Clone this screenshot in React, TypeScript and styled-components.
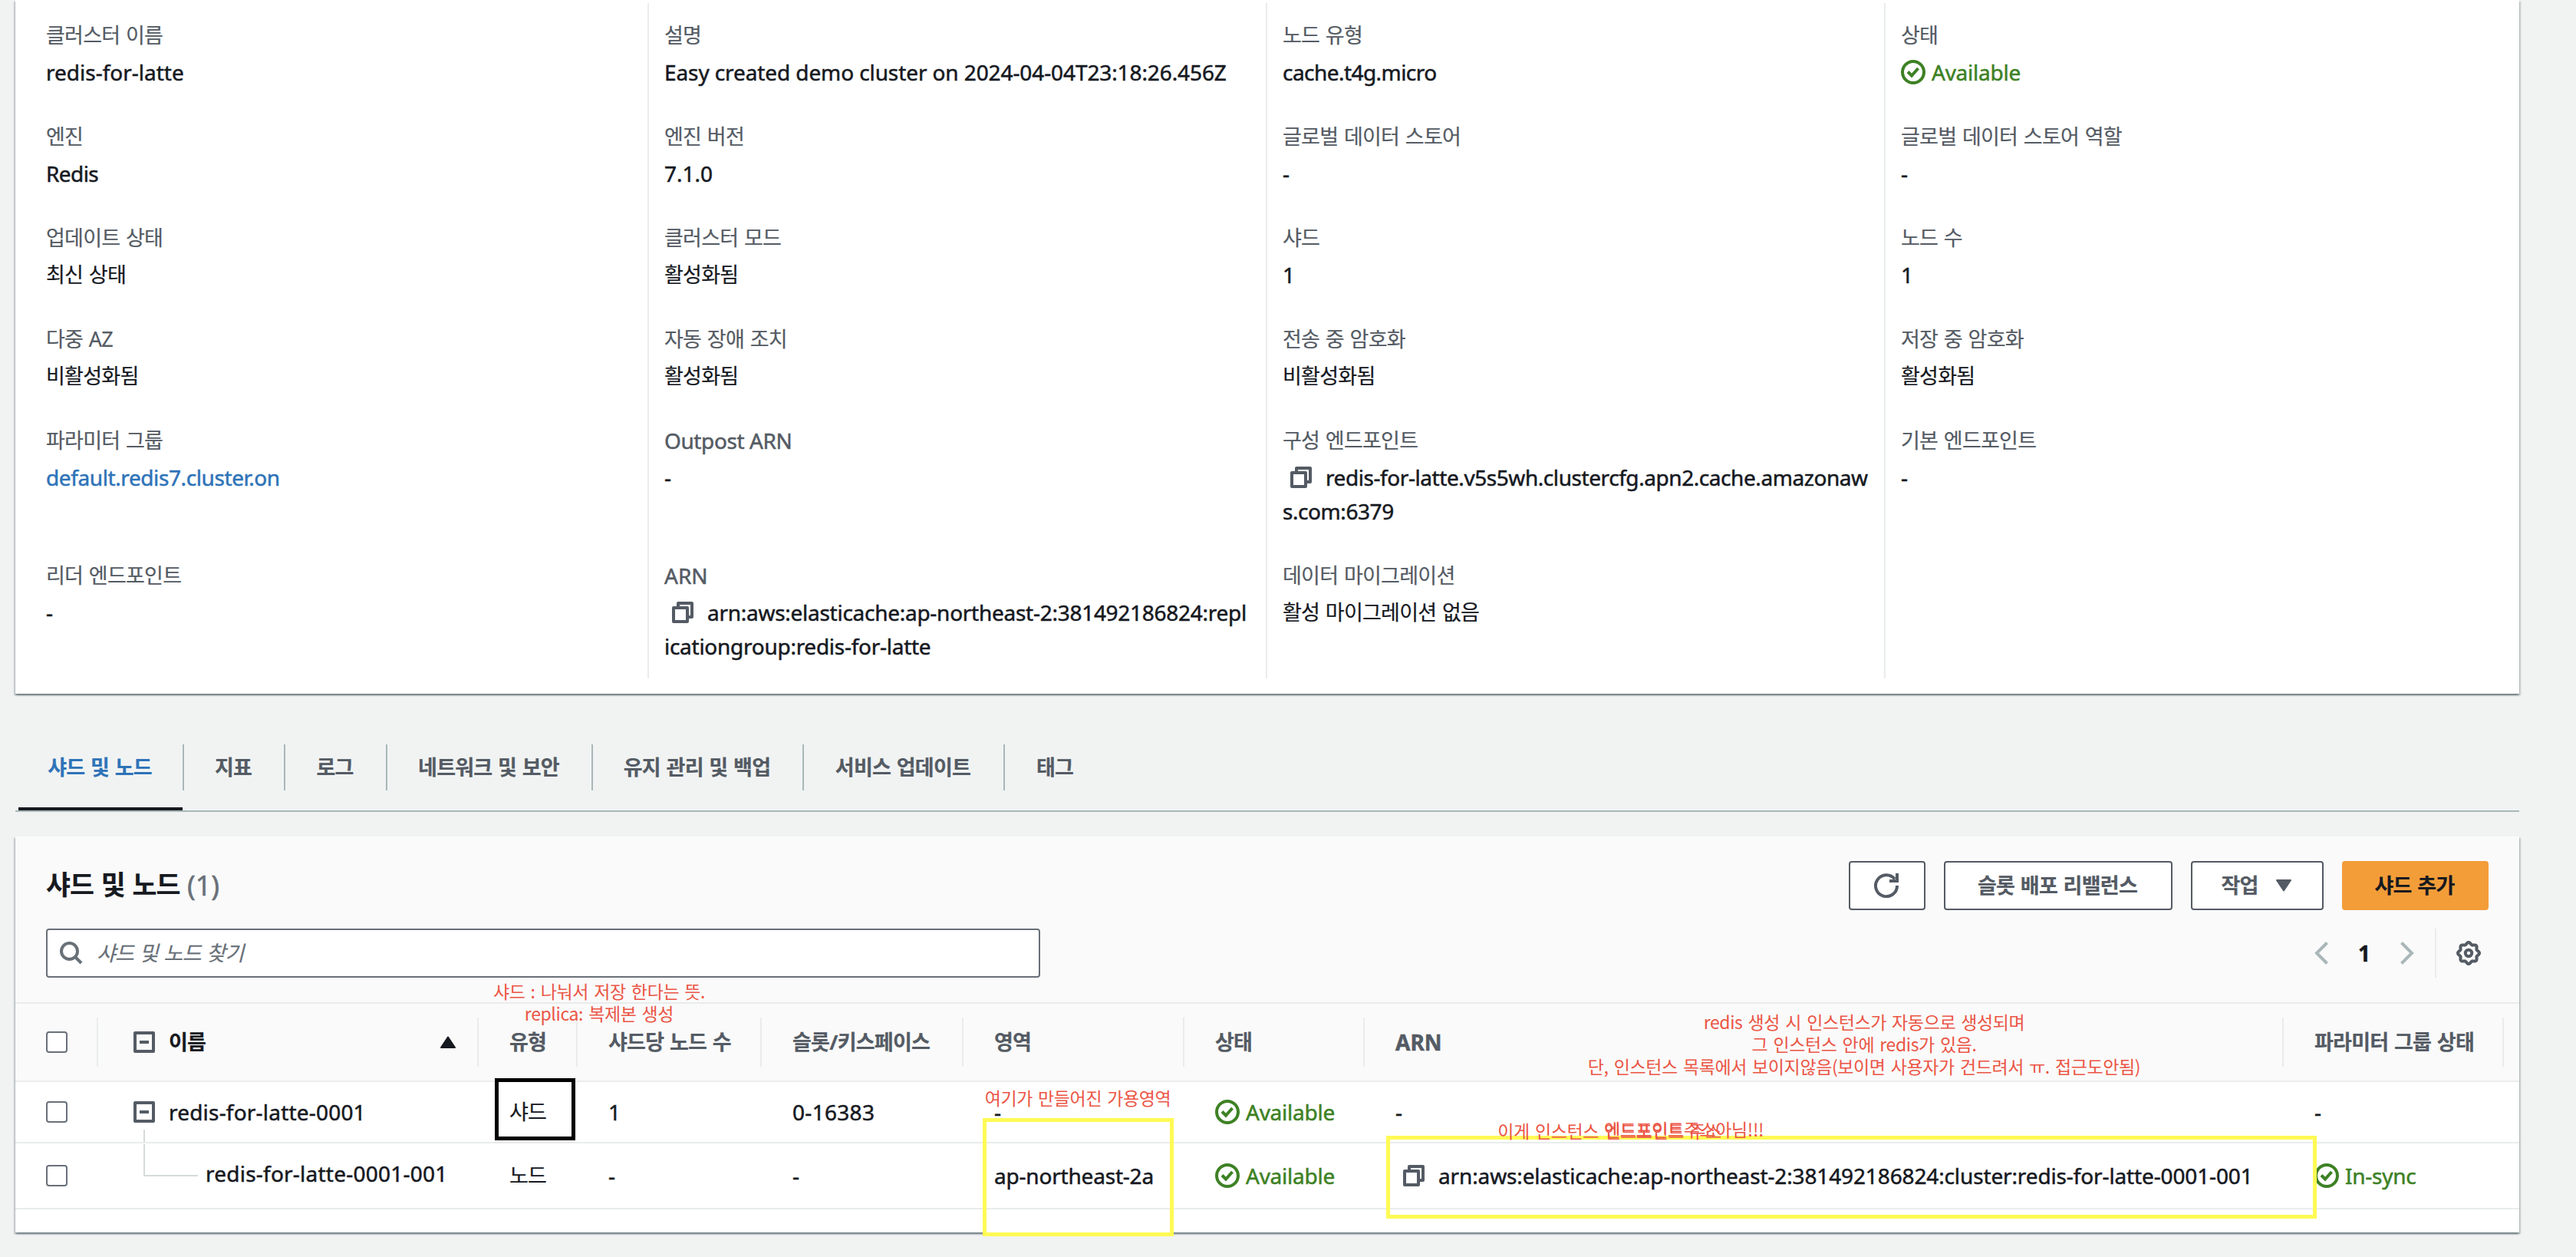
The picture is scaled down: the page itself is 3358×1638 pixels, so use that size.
import type { ReactNode } from "react";
import styled, { createGlobalStyle, css } from "styled-components";

type Detail = {
  label: ReactNode;
  value: ReactNode;
};

const GREEN = "#3d8124";
const GREY = "#545b64";
const LINE = "#eaecec";
const COLUMNS = "108px 496px 129px 240px 263px 288px 235px 1198px 287px 20px";

const gearPath =
  Array.from({ length: 96 }, (_, i) => {
    const angle = (i / 96) * Math.PI * 2;
    const r = 12.7 + 1.3 * Math.cos(angle * 8);
    const x = (16 + r * Math.cos(angle)).toFixed(2);
    const y = (16 + r * Math.sin(angle)).toFixed(2);
    return `${i ? "L" : "M"}${x} ${y}`;
  }).join("") + "Z";

const CheckIcon = () => (
  <Icon width="32" height="32" viewBox="0 0 32 32">
    <circle cx="16" cy="16" r="14" />
    <path d="M9 15.5l5 5 8.5-9.5" />
  </Icon>
);

const CopyIcon = () => (
  <Icon width="28" height="28" viewBox="0 0 28 28">
    <path d="M8 6V2H26V20H22" strokeLinejoin="round" />
    <path d="M2 8H20V26H2Z" strokeLinejoin="round" />
  </Icon>
);

const RefreshIcon = () => (
  <Icon width="32" height="32" viewBox="0 0 32 32">
    <path d="M30 16A14 14 0 1 1 27 7.5" />
    <path d="M30 0V10H20" />
  </Icon>
);

const SearchIcon = () => (
  <Icon width="30" height="30" viewBox="0 0 30 30">
    <circle cx="12.5" cy="12.5" r="10.5" />
    <path d="M19.5 19.5L28 28" />
  </Icon>
);

const GearIcon = () => (
  <Icon width="32" height="32" viewBox="0 0 32 32">
    <path d={gearPath} />
    <circle cx="16" cy="16" r="4.2" />
  </Icon>
);

const ExpandIcon = () => (
  <Icon width="28" height="28" viewBox="0 0 28 28">
    <path d="M2 2H26V26H2Z" strokeLinejoin="round" />
    <path d="M8 14H20" />
  </Icon>
);

const Chevron = ({ d }: { d: string }) => (
  <Icon width="18" height="30" viewBox="0 0 18 30">
    <path d={d} />
  </Icon>
);

const Status = ({ children }: { children: ReactNode }) => (
  <StatusText>
    <CheckIcon />
    <Latin $tracking={-0.25}>{children}</Latin>
  </StatusText>
);

const Copyable = ({
  tracking,
  children,
}: {
  tracking: number;
  children: ReactNode;
}) => (
  <>
    <CopySlot>
      <CopyIcon />
    </CopySlot>
    <Latin $tracking={tracking}>{children}</Latin>
  </>
);

const hasKorean = (text: string) => /[가-힣]/.test(text);

const Text = ({ children }: { children: ReactNode }) =>
  typeof children === "string" && hasKorean(children) ? (
    <Korean>{children}</Korean>
  ) : (
    <>{children}</>
  );

const App = () => {
  const detailColumns: Detail[][] = [
    [
      { label: "클러스터 이름", value: "redis-for-latte" },
      { label: "엔진", value: <Latin $tracking={-0.6}>Redis</Latin> },
      { label: "업데이트 상태", value: "최신 상태" },
      { label: "다중 AZ", value: "비활성화됨" },
      {
        label: "파라미터 그룹",
        value: <Link>default.redis7.cluster.on</Link>,
      },
      { label: "리더 엔드포인트", value: "-" },
    ],
    [
      {
        label: "설명",
        value: (
          <Latin $tracking={-0.1}>
            Easy created demo cluster on 2024-04-04T23:18:26.456Z
          </Latin>
        ),
      },
      { label: "엔진 버전", value: "7.1.0" },
      { label: "클러스터 모드", value: "활성화됨" },
      { label: "자동 장애 조치", value: "활성화됨" },
      { label: <Latin $tracking={-0.4}>Outpost ARN</Latin>, value: "-" },
      {
        label: "ARN",
        value: (
          <Copyable tracking={-0.27}>
            arn:aws:elasticache:ap-northeast-2:381492186824:repl
            <br />
            icationgroup:redis-for-latte
          </Copyable>
        ),
      },
    ],
    [
      {
        label: "노드 유형",
        value: <Latin $tracking={-0.55}>cache.t4g.micro</Latin>,
      },
      { label: "글로벌 데이터 스토어", value: "-" },
      { label: "샤드", value: "1" },
      { label: "전송 중 암호화", value: "비활성화됨" },
      {
        label: "구성 엔드포인트",
        value: (
          <Copyable tracking={-0.43}>
            redis-for-latte.v5s5wh.clustercfg.apn2.cache.amazonaw
            <br />
            s.com:6379
          </Copyable>
        ),
      },
      { label: "데이터 마이그레이션", value: "활성 마이그레이션 없음" },
    ],
    [
      { label: "상태", value: <Status>Available</Status> },
      { label: "글로벌 데이터 스토어 역할", value: "-" },
      { label: "노드 수", value: "1" },
      { label: "저장 중 암호화", value: "활성화됨" },
      { label: "기본 엔드포인트", value: "-" },
    ],
  ];

  return (
    <Page>
      <GlobalStyle />
      <DetailPanel>
        {detailColumns.map((items, index) => (
          <DetailColumn key={index} $first={index === 0}>
            {items.map(({ label, value }, row) => (
              <DetailItem key={row}>
                <Label>
                  <Text>{label}</Text>
                </Label>
                <Value>
                  <Text>{value}</Text>
                </Value>
              </DetailItem>
            ))}
          </DetailColumn>
        ))}
      </DetailPanel>

      <TabBar>
        {tabs.map(({ name, width }, index) => (
          <Tab key={name} $width={width} $active={index === 0}>
            <TabName $last={index === tabs.length - 1}>
              <Korean>{name}</Korean>
            </TabName>
          </Tab>
        ))}
      </TabBar>

      <TablePanel>
        <PanelHeader>
          <TitleRow>
            <Title>
              <Korean>샤드 및 노드</Korean> <Count>(1)</Count>
            </Title>
            <Actions>
              <Button $width={100}>
                <RefreshIcon />
              </Button>
              <Button $width={298}>
                <Korean>슬롯 배포 리밸런스</Korean>
              </Button>
              <Button $width={173}>
                <Korean>작업</Korean>
                <svg width="22" height="16" viewBox="0 0 22 16">
                  <path
                    d="M2 1H20L11 14.5Z"
                    fill="currentColor"
                    stroke="currentColor"
                    strokeWidth="2"
                    strokeLinejoin="round"
                  />
                </svg>
              </Button>
              <Button $width={191} $primary>
                <Korean>샤드 추가</Korean>
              </Button>
            </Actions>
          </TitleRow>
          <FilterRow>
            <SearchBox>
              <SearchIcon />
              <Korean>샤드 및 노드 찾기</Korean>
            </SearchBox>
            <Pagination>
              <Chevron d="M16.5 1.5L3 15L16.5 28.5" />
              <PageNumber>1</PageNumber>
              <Chevron d="M1.5 1.5L15 15L1.5 28.5" />
              <Settings>
                <GearIcon />
              </Settings>
            </Pagination>
          </FilterRow>
        </PanelHeader>

        <HeaderRow>
          <HeaderCell>
            <Checkbox />
          </HeaderCell>
          <HeaderCell $sorted>
            <Expander>
              <ExpandIcon />
            </Expander>
            <Korean>이름</Korean>
            <SortArrow width="20" height="16" viewBox="0 0 20 16">
              <path
                d="M10 1.5L19 15H1Z"
                fill="currentColor"
                stroke="currentColor"
                strokeWidth="2"
                strokeLinejoin="round"
              />
            </SortArrow>
          </HeaderCell>
          {headers.map((header) => (
            <HeaderCell key={header}>
              <Text>{header}</Text>
            </HeaderCell>
          ))}
        </HeaderRow>

        <Row $height={80}>
          <Cell>
            <Checkbox />
          </Cell>
          <Cell>
            <Expander>
              <ExpandIcon />
            </Expander>
            <Latin $tracking={0.2}>redis-for-latte-0001</Latin>
            <TreeStub />
          </Cell>
          <Cell>
            <Korean>샤드</Korean>
          </Cell>
          <Cell>1</Cell>
          <Cell>
            <Latin $tracking={0.3}>0-16383</Latin>
          </Cell>
          <Cell>-</Cell>
          <Cell>
            <Status>Available</Status>
          </Cell>
          <Cell>-</Cell>
          <Cell>-</Cell>
        </Row>
        <Row $height={86}>
          <Cell>
            <Checkbox />
          </Cell>
          <Cell>
            <TreeBranch />
            <NodeName>redis-for-latte-0001-001</NodeName>
          </Cell>
          <Cell>
            <Korean>노드</Korean>
          </Cell>
          <Cell>-</Cell>
          <Cell>-</Cell>
          <Cell>
            <Latin $tracking={-0.2}>ap-northeast-2a</Latin>
          </Cell>
          <Cell>
            <Status>Available</Status>
          </Cell>
          <Cell>
            <Copyable tracking={-0.13}>
              arn:aws:elasticache:ap-northeast-2:381492186824:cluster:redis-for-latte-0001-001
            </Copyable>
          </Cell>
          <Cell>
            <Status>In-sync</Status>
          </Cell>
        </Row>
      </TablePanel>

      <Frame $x={645} $y={1405} $w={105} $h={81} $color="#000" />
      <Frame $x={1281} $y={1457} $w={249} $h={154} $color="#fffa54" />
      <Frame $x={1807} $y={1480} $w={1213} $h={108} $color="#fffa54" />
      <Note $x={781} $y={1277}>
        샤드 : 나눠서 저장 한다는 뜻.
        <br />
        replica: 복제본 생성
      </Note>
      <Note $x={1405} $y={1416}>
        여기가 만들어진 가용영역
      </Note>
      <Note $x={2430} $y={1317}>
        redis 생성 시 인스턴스가 자동으로 생성되며
        <br />그 인스턴스 안에 redis가 있음.
        <br />
        단, 인스턴스 목록에서 보이지않음(보이면 사용자가 건드려서 ㅠ. 접근도안됨)
      </Note>
      <Note $x={2098} $y={1459}>
        이게 인스턴스 엔드포인트 주소
      </Note>
      <Note $x={2195} $y={1457}>
        엔드포인트주소아님!!!
      </Note>
    </Page>
  );
};

export default App;

const tabs = [
  { name: "샤드 및 노드", width: 216 },
  { name: "지표", width: 132 },
  { name: "로그", width: 133 },
  { name: "네트워크 및 보안", width: 268 },
  { name: "유지 관리 및 백업", width: 275 },
  { name: "서비스 업데이트", width: 262 },
  { name: "태그", width: 132 },
];

const headers = [
  "유형",
  "샤드당 노드 수",
  "슬롯/키스페이스",
  "영역",
  "상태",
  "ARN",
  "파라미터 그룹 상태",
];

const GlobalStyle = createGlobalStyle`
  * {
    box-sizing: border-box;
  }

  body {
    margin: 0;
    background-color: #f1f3f3;
  }
`;

const Page = styled.div`
  position: relative;
  width: 3358px;
  height: 1638px;
  padding: 0 74px 0 20px;
  overflow: hidden;
  color: #16191f;
  font-family: "Noto Sans", "Noto Sans CJK KR", sans-serif;
  font-size: 28px;
  line-height: 44px;
  -webkit-text-stroke: 0.5px;
`;

const Korean = styled.span`
  font-size: 0.965em;
  line-height: 1;
  letter-spacing: -0.028em;
  word-spacing: 0.05em;
  vertical-align: 1px;
  -webkit-text-stroke: 0.2px;
`;

const Latin = styled.span<{ $tracking: number }>`
  letter-spacing: ${({ $tracking }) => $tracking}px;
`;

const Icon = styled.svg`
  flex: none;
  fill: none;
  stroke: currentColor;
  stroke-width: 4;
`;

const panelShadow = css`
  box-shadow:
    0 2px 2px 0 rgba(0, 28, 36, 0.4),
    2px 2px 2px 0 rgba(0, 28, 36, 0.15),
    -2px 2px 2px 0 rgba(0, 28, 36, 0.15);
`;

const DetailPanel = styled.div`
  display: grid;
  grid-template-columns: 824px 806px 806px 828px;
  height: 904px;
  padding: 4px 0 20px;
  background-color: #fff;
  ${panelShadow}
`;

const DetailColumn = styled.div<{ $first: boolean }>`
  height: 880px;
  padding: 20px 0 0 ${({ $first }) => ($first ? "40px" : "20px")};
  border-left: ${({ $first }) => ($first ? "none" : `2px solid ${LINE}`)};
`;

const DetailItem = styled.div`
  display: flex;
  flex-direction: column;
  gap: 4px;
  height: 92px;
  margin-bottom: 40px;

  &:nth-child(5) {
    height: 136px;
  }

  &:last-child {
    margin-bottom: 0;
  }
`;

const Label = styled.div`
  height: 44px;
  color: ${GREY};
`;

const Value = styled.div`
  white-space: nowrap;
`;

const Link = styled.a`
  color: #2e73b8;
  letter-spacing: -0.4px;
`;

const StatusText = styled.span`
  display: inline-flex;
  align-items: center;
  gap: 8px;
  height: 44px;
  color: ${GREEN};
  vertical-align: top;
`;

const CopySlot = styled.span`
  display: inline-flex;
  align-items: center;
  height: 44px;
  padding: 0 18px 0 10px;
  color: ${GREY};
  vertical-align: top;
`;

const TabBar = styled.div`
  display: flex;
  height: 116px;
  margin-top: 38px;
  padding-left: 4px;
  border-bottom: 2px solid #aab7b8;
`;

const Tab = styled.div<{ $width: number; $active: boolean }>`
  display: flex;
  align-items: flex-start;
  width: ${({ $width }) => $width}px;
  padding-top: 28px;
  color: ${({ $active }) => ($active ? "#2e73b8" : GREY)};
  background: ${({ $active }) =>
    $active
      ? "linear-gradient(#16191f, #16191f) 0 100% / 214px 4px no-repeat"
      : "none"};
  font-weight: 700;
`;

const TabName = styled.div<{ $last: boolean }>`
  display: flex;
  align-items: center;
  justify-content: center;
  width: 100%;
  height: 60px;
  padding: 0 2px 1px 0;
  border-right: ${({ $last }) => ($last ? "none" : "2px solid #aab7b8")};
`;

const TablePanel = styled.div`
  height: 516px;
  margin-top: 32px;
  background-color: #fff;
  ${panelShadow}
`;

const PanelHeader = styled.div`
  display: flex;
  flex-direction: column;
  gap: 24px;
  height: 216px;
  padding: 32px 40px 0;
  background-color: #fafafa;
`;

const TitleRow = styled.div`
  display: flex;
  align-items: center;
  justify-content: space-between;
  height: 64px;
`;

const Title = styled.div`
  font-size: 36px;
  font-weight: 700;
`;

const Count = styled.span`
  color: #687078;
  font-weight: 400;
`;

const Actions = styled.div`
  display: flex;
  gap: 24px;
`;

const Button = styled.button<{ $width: number; $primary?: boolean }>`
  display: flex;
  align-items: center;
  justify-content: center;
  gap: 22px;
  width: ${({ $width }) => $width}px;
  height: 64px;
  padding: 0 2px 1px 0;
  border: 2px solid ${({ $primary }) => ($primary ? "#f39d39" : GREY)};
  border-radius: 4px;
  background-color: ${({ $primary }) => ($primary ? "#f39d39" : "#fff")};
  color: ${({ $primary }) => ($primary ? "#16191f" : GREY)};
  font: inherit;
  font-weight: 700;
`;

const FilterRow = styled.div`
  display: flex;
  justify-content: space-between;
  height: 64px;
`;

const SearchBox = styled.div`
  display: flex;
  align-items: center;
  gap: 18px;
  width: 1296px;
  padding-left: 16px;
  border: 2px solid #687078;
  border-radius: 4px;
  background-color: #fff;
  color: #687078;
  font-style: italic;
`;

const Pagination = styled.div`
  display: flex;
  align-items: center;
  color: #aab7b8;
`;

const PageNumber = styled.div`
  width: 94px;
  color: #16191f;
  font-weight: 700;
  text-align: center;
`;

const Settings = styled.div`
  display: flex;
  align-items: center;
  height: 64px;
  margin-left: 27px;
  padding: 0 10px 0 26px;
  border-left: 2px solid ${LINE};
  color: ${GREY};
`;

const HeaderRow = styled.div`
  display: grid;
  grid-template-columns: ${COLUMNS};
  align-items: center;
  height: 104px;
  border-top: 2px solid ${LINE};
  border-bottom: 2px solid ${LINE};
  background-color: #fafafa;
`;

const HeaderCell = styled.div<{ $sorted?: boolean }>`
  display: flex;
  align-items: center;
  height: 64px;
  padding-left: 40px;
  border-right: 2px solid ${LINE};
  color: ${({ $sorted }) => ($sorted ? "#16191f" : GREY)};
  font-weight: 700;
  white-space: nowrap;
`;

const Row = styled.div<{ $height: number }>`
  display: grid;
  grid-template-columns: ${COLUMNS};
  height: ${({ $height }) => $height}px;
  border-bottom: 2px solid ${LINE};
`;

const Cell = styled.div`
  position: relative;
  display: flex;
  align-items: center;
  padding-left: 40px;
  white-space: nowrap;
`;

const Checkbox = styled.div`
  width: 28px;
  height: 28px;
  border: 2px solid #687078;
  border-radius: 4px;
  background-color: #fff;
`;

const Expander = styled.span`
  display: flex;
  padding: 0 18px 0 6px;
  color: ${GREY};
`;

const SortArrow = styled.svg`
  margin: 0 28px 0 auto;
`;

const TreeStub = styled.div`
  position: absolute;
  bottom: 0;
  left: 59px;
  width: 2px;
  height: 16px;
  background-color: #d5dbdb;
`;

const TreeBranch = styled.div`
  width: 71px;
  height: 42px;
  margin: 0 10px 40px 19px;
  border-bottom: 2px solid #d5dbdb;
  border-left: 2px solid #d5dbdb;
`;

const NodeName = styled.div`
  padding-bottom: 6px;
  letter-spacing: 0.23px;
`;

const Frame = styled.div<{
  $x: number;
  $y: number;
  $w: number;
  $h: number;
  $color: string;
}>`
  position: absolute;
  top: ${({ $y }) => $y}px;
  left: ${({ $x }) => $x}px;
  width: ${({ $w }) => $w}px;
  height: ${({ $h }) => $h}px;
  border: 5px solid ${({ $color }) => $color};
`;

// $x is the horizontal centre of the note
const Note = styled.div<{ $x: number; $y: number }>`
  position: absolute;
  top: ${({ $y }) => $y}px;
  left: ${({ $x }) => $x}px;
  transform: translateX(-50%);
  color: #eb5545;
  font-family: "Noto Sans CJK KR", sans-serif;
  font-size: 23px;
  line-height: 29px;
  letter-spacing: -0.4px;
  word-spacing: 2.4px;
  text-align: center;
  white-space: nowrap;
  -webkit-text-stroke: 0;
`;
